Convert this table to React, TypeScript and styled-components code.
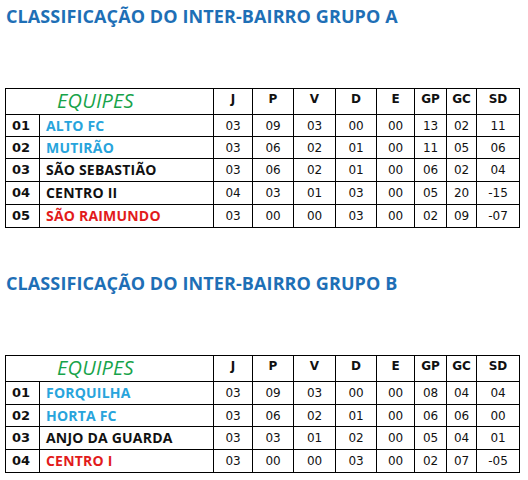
import React from "react";
import styled, { createGlobalStyle } from "styled-components";

const Global = createGlobalStyle`
  html, body { margin: 0; padding: 0; background: #ffffff; }
  body { font-family: "DejaVu Sans", sans-serif; }
`;

const Page = styled.div`
  width: 528px;
  height: 480px;
  padding: 0 0 0 5px;
  box-sizing: border-box;
  display: flex;
  flex-direction: column;
  overflow: hidden;
`;

const Section = styled.section<{ $gap: number; $top: number }>`
  display: flex;
  flex-direction: column;
  gap: ${(p) => p.$gap}px;
  margin-top: ${(p) => p.$top}px;
`;

const Title = styled.h1`
  margin: 0;
  padding-left: 1px;
  font-family: "Open Sans", sans-serif;
  font-weight: 700;
  font-size: 18px;
  line-height: 24px;
  letter-spacing: 0.1px;
  color: #1e6fb6;
  white-space: nowrap;
`;

const Table = styled.table`
  border-collapse: collapse;
  table-layout: fixed;
  width: 514px;
`;

const Row = styled.tr<{ $h: number }>`
  height: ${(p) => p.$h}px;
`;

const Cell = styled.td`
  border: 1px solid #000;
  padding: 0;
  text-align: center;
  vertical-align: middle;
  font-family: "DejaVu Sans", sans-serif;
  font-size: 12px;
  color: #111;
  line-height: 14px;
`;

const HeadCell = styled(Cell)`
  font-weight: 700;
  padding-bottom: 6px;
`;

const TeamsHead = styled(Cell)`
  text-align: left;
  padding-left: 51px;
  padding-bottom: 2px;
  font-family: "Open Sans", sans-serif;
  font-style: italic;
  font-size: 20px;
  line-height: 22px;
  color: #17a34a;
  letter-spacing: 0.2px;
`;

const NumCell = styled(Cell)`
  text-align: left;
  padding-left: 6px;
  font-weight: 700;
  font-size: 13px;
`;

const NameCell = styled(Cell)<{ $color: string }>`
  text-align: left;
  padding-left: 6px;
  font-family: "Open Sans", sans-serif;
  font-weight: 700;
  font-size: 14px;
  letter-spacing: 0.2px;
  color: ${(p) => p.$color};
`;

const widths = [34, 174, 39, 41, 42, 41, 38, 32, 30, 43];
const headers = ["J", "P", "V", "D", "E", "GP", "GC", "SD"];

const BLUE = "#28a4dc";
const RED = "#e21b1b";
const BLACK = "#111111";

type Team = { n: string; name: string; color: string; s: string[] };

const groupA: Team[] = [
  { n: "01", name: "ALTO FC", color: BLUE, s: ["03", "09", "03", "00", "00", "13", "02", "11"] },
  { n: "02", name: "MUTIRÃO", color: BLUE, s: ["03", "06", "02", "01", "00", "11", "05", "06"] },
  { n: "03", name: "SÃO SEBASTIÃO", color: BLACK, s: ["03", "06", "02", "01", "00", "06", "02", "04"] },
  { n: "04", name: "CENTRO II", color: BLACK, s: ["04", "03", "01", "03", "00", "05", "20", "-15"] },
  { n: "05", name: "SÃO RAIMUNDO", color: RED, s: ["03", "00", "00", "03", "00", "02", "09", "-07"] },
];

const groupB: Team[] = [
  { n: "01", name: "FORQUILHA", color: BLUE, s: ["03", "09", "03", "00", "00", "08", "04", "04"] },
  { n: "02", name: "HORTA FC", color: BLUE, s: ["03", "06", "02", "01", "00", "06", "06", "00"] },
  { n: "03", name: "ANJO DA GUARDA", color: BLACK, s: ["03", "03", "01", "02", "00", "05", "04", "01"] },
  { n: "04", name: "CENTRO I", color: RED, s: ["03", "00", "00", "03", "00", "02", "07", "-05"] },
];

function Standings({ teams, heights }: { teams: Team[]; heights: number[] }) {
  return (
    <Table>
      <colgroup>
        {widths.map((w, i) => (
          <col key={i} style={{ width: w }} />
        ))}
      </colgroup>
      <tbody>
        <Row $h={26}>
          <TeamsHead colSpan={2}>EQUIPES</TeamsHead>
          {headers.map((h) => (
            <HeadCell key={h}>{h}</HeadCell>
          ))}
        </Row>
        {teams.map((t, i) => (
          <Row key={t.n} $h={heights[i]}>
            <NumCell>{t.n}</NumCell>
            <NameCell $color={t.color}>{t.name}</NameCell>
            {t.s.map((v, j) => (
              <Cell key={j}>{v}</Cell>
            ))}
          </Row>
        ))}
      </tbody>
    </Table>
  );
}

export default function App() {
  return (
    <>
      <Global />
      <Page>
        <Section $gap={60} $top={4}>
          <Title>CLASSIFICAÇÃO DO INTER-BAIRRO GRUPO A</Title>
          <Standings teams={groupA} heights={[22, 22, 23, 23, 23]} />
        </Section>
        <Section $gap={60} $top={43}>
          <Title>CLASSIFICAÇÃO DO INTER-BAIRRO GRUPO B</Title>
          <Standings teams={groupB} heights={[23, 22, 23, 23]} />
        </Section>
      </Page>
    </>
  );
}
